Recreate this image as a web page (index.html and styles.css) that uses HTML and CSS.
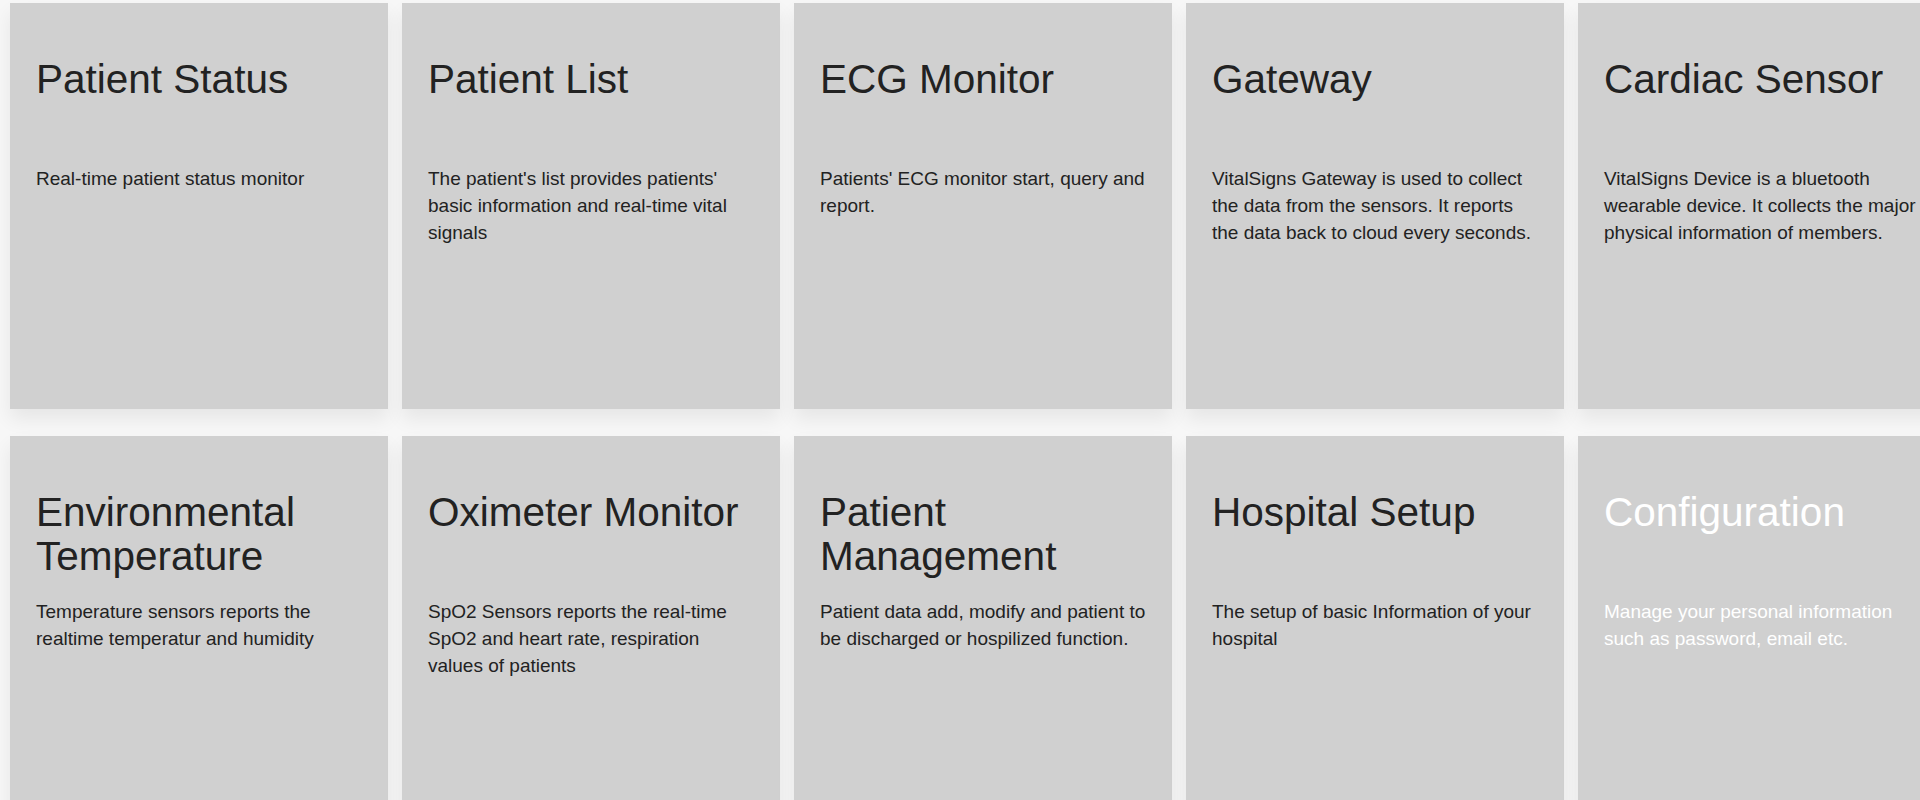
FILE: index.html
```html
<!DOCTYPE html>
<html lang="en">
<head>
  <meta charset="UTF-8" />
  <meta name="viewport" content="width=device-width, initial-scale=1" />
  <title>VitalSigns - Dashboard</title>
  <link rel="stylesheet" href="styles.css">
</head>
<body>

  <div class="tiles">
    <a class="tile" href="#">
      <h2>Patient Status</h2>
      <p>Real-time patient status monitor</p>
    </a>
    <a class="tile" href="#">
      <h2>Patient List</h2>
      <p>The patient's list provides patients' basic information and real-time vital signals</p>
    </a>
    <a class="tile" href="#">
      <h2>ECG Monitor</h2>
      <p>Patients' ECG monitor start, query and report.</p>
    </a>
    <a class="tile" href="#">
      <h2>Gateway</h2>
      <p>VitalSigns Gateway is used to collect the data from the sensors. It reports the data back to cloud every seconds.</p>
    </a>
    <a class="tile" href="#">
      <h2>Cardiac Sensor</h2>
      <p>VitalSigns Device is a bluetooth wearable device. It collects the major physical information of members.</p>
    </a>

    <a class="tile" href="#">
      <h2>Environmental Temperature</h2>
      <p>Temperature sensors reports the realtime temperatur and humidity</p>
    </a>
    <a class="tile" href="#">
      <h2>Oximeter Monitor</h2>
      <p>SpO2 Sensors reports the real-time SpO2 and heart rate, respiration values of patients</p>
    </a>
    <a class="tile" href="#">
      <h2>Patient Management</h2>
      <p>Patient data add, modify and patient to be discharged or hospilized function.</p>
    </a>
    <a class="tile" href="#">
      <h2>Hospital Setup</h2>
      <p>The setup of basic Information of your hospital</p>
    </a>
    <a class="tile active" href="#">
      <h2>Configuration</h2>
      <p>Manage your personal information such as password, email etc.</p>
    </a>
  </div>

</body>
</html>
```

FILE: styles.css
```css
html, body {
  overflow: hidden;
}
body {
  font-family: 'Liberation Sans', Arial, Helvetica, sans-serif;
  margin: 0;
  padding: 3px 0 0 10px;
  background-color: #f7f7f7;
  color: #222;
}
.tiles {
  display: grid;
  grid-template-columns: repeat(5, 378px);
  grid-auto-rows: 406px;
  column-gap: 14px;
  row-gap: 27px;
  width: max-content;
}
.tile {
  display: block;
  box-sizing: border-box;
  padding: 54px 24px 0 26px;
  background-color: #d0d0d0;
  color: #222;
  text-decoration: none;
  box-shadow: 0 10px 18px rgba(0,0,0,0.07);
}
.tile h2 {
  margin: 0 0 20px;
  height: 88px;
  font-size: 40.5px;
  line-height: 44px;
  font-weight: normal;
}
.tile p {
  margin: 0;
  font-size: 19px;
  line-height: 27px;
}
.tile.active {
  color: #fff;
}
```
